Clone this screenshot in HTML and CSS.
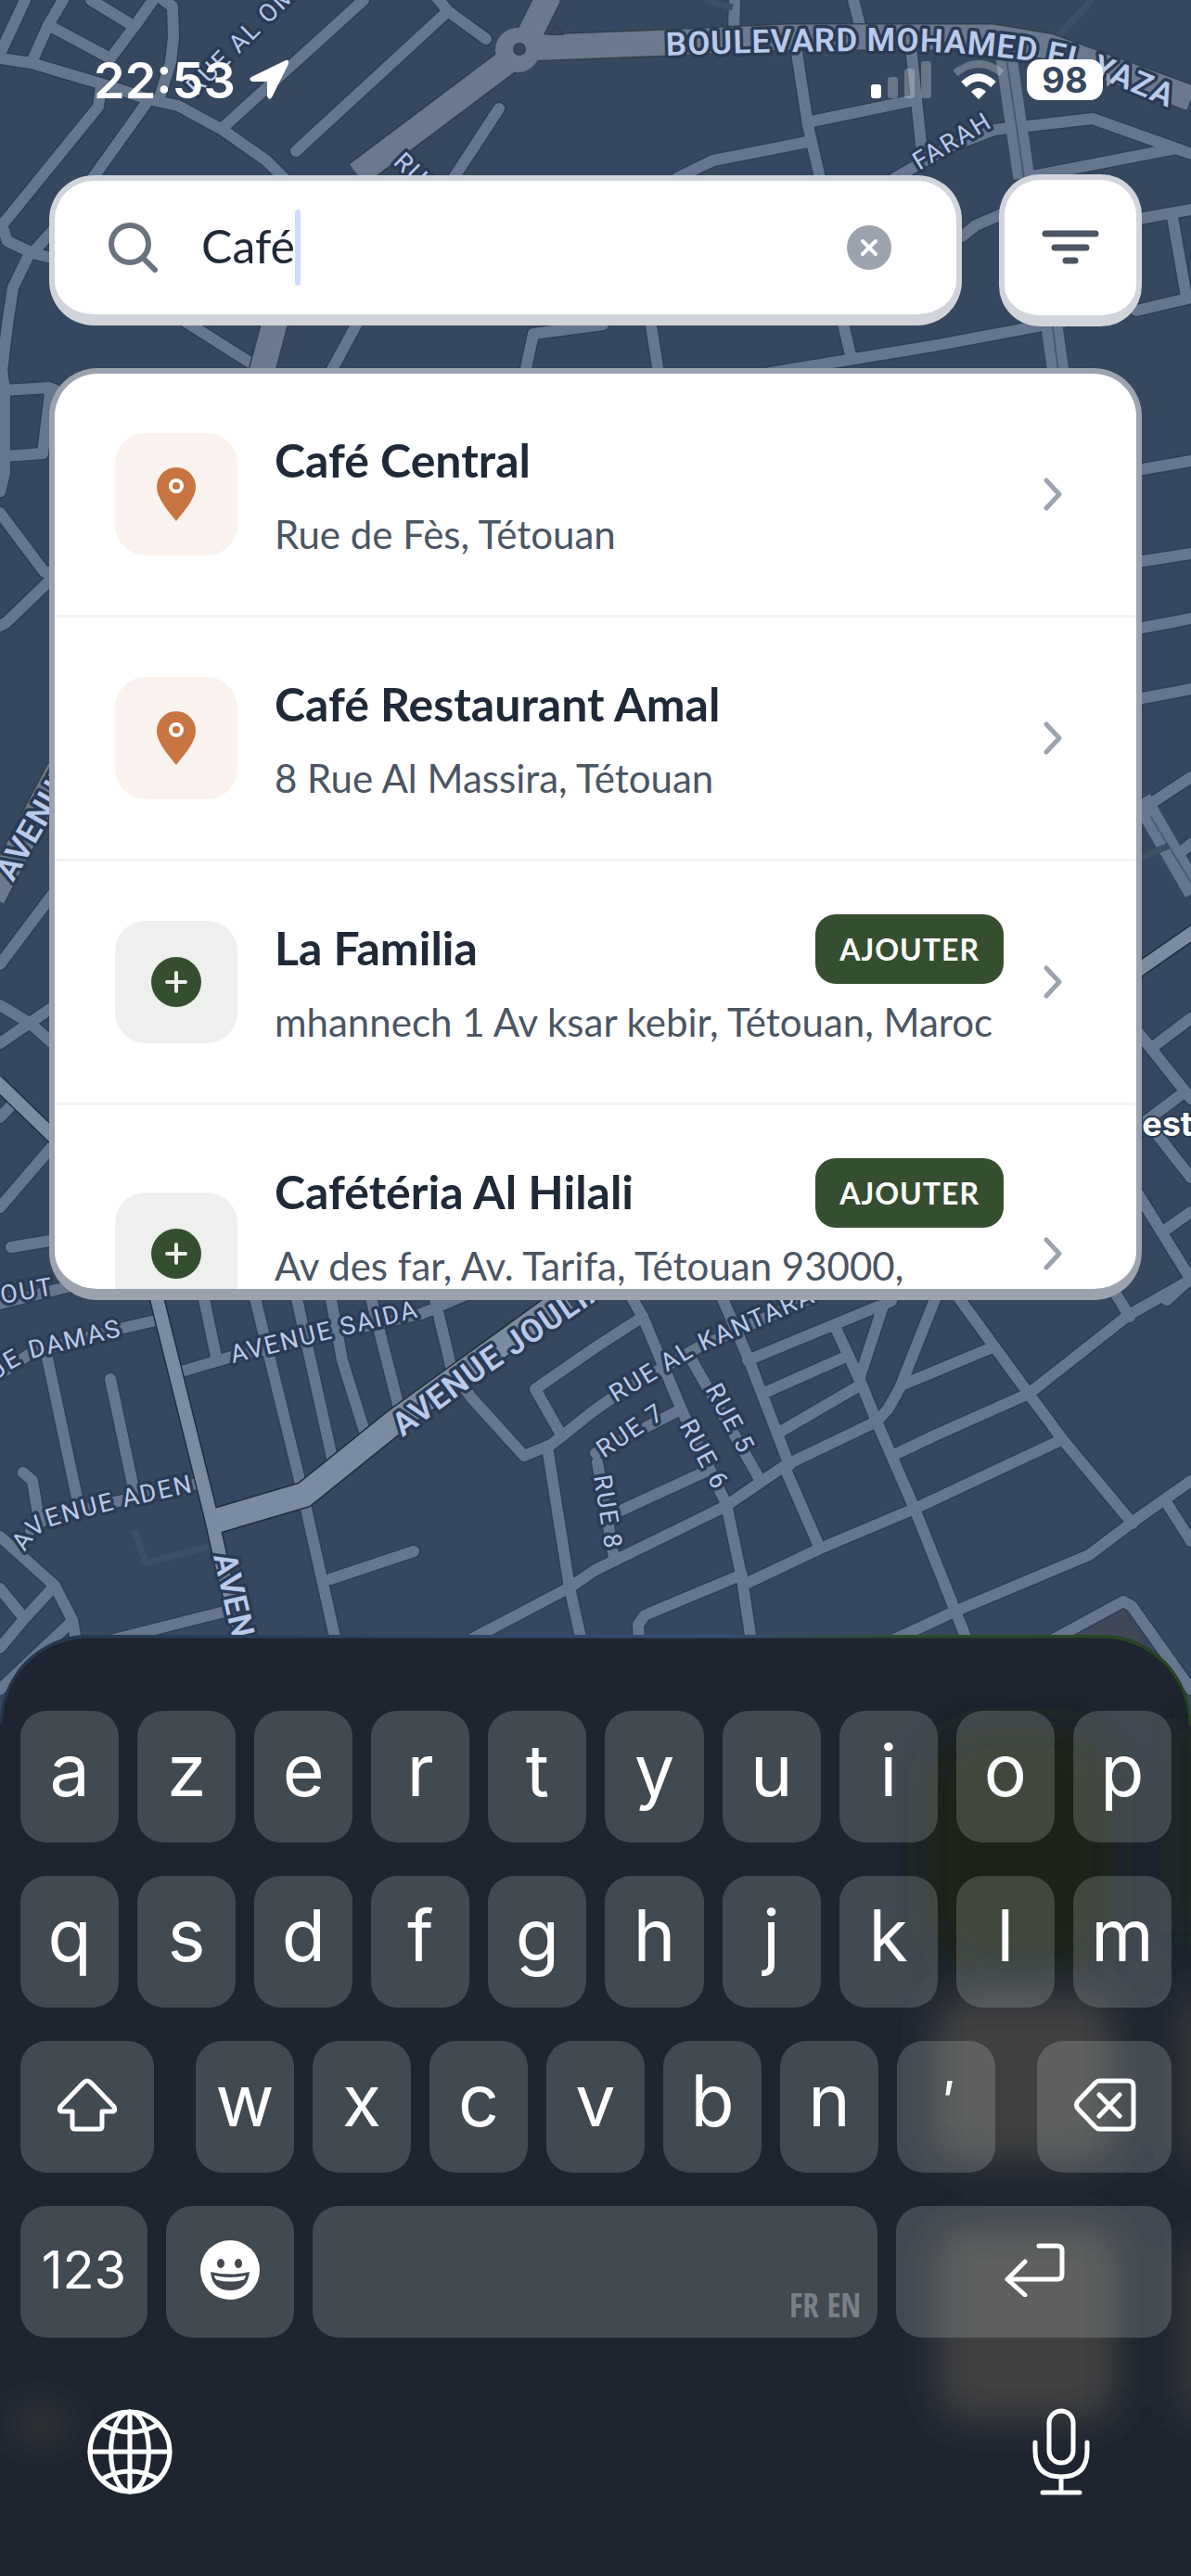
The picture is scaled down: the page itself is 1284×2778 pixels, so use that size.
FILE: index.html
```html
<!DOCTYPE html>
<html lang="fr">
<head>
<meta charset="utf-8">
<meta name="viewport" content="width=device-width, initial-scale=1">
<title>Recherche de cafés</title>
<link rel="stylesheet" href="styles.css">
</head>
<body>
<div class="app">
  <svg class="map" viewBox="0 0 1284 2778" preserveAspectRatio="xMidYMin slice" aria-hidden="true">
    <defs>
      <g id="streets">
        <path d="M27 0L0 58M68 0L52 27L35 65M98 0L144 28M165 0L146 27L119 63M52 27L119 63M176 0L186 7L187 40L184 67L172 105M0 63L34 68L118 93L160 107L192 114L240 140L287 173L310 196M241 137L392 0M319 163L483 12M470 -4L483 12L524 42M160 108L100 192M109 93L106 115L2 243L8 260L35 273L60 279M35 273L60 245M31 275L14 310L8 350L2 400L5 420L5 510L0 530"/>
        <path d="M538 117L489 192M387 345L356 402M197 345L276 395M650 350L575 360L566 402M792 0L791 35M920 0L929 35M858 50L871 135L884 192M908 345L918 387M982 50L994 165M875 131L986 108M871 153L769 173L730 192M965 192L1020 160L1072 140L1178 128L1268 160L1284 166M1113 190L1268 160M1037 255L1052 243L1080 231M1228 236L1284 226M1264 234L1279 320M1225 335L1284 321M830 402L1006 373L1150 346M701 345L710 402"/>
        <path d="M1226 507L1284 497M1226 606L1284 597M1226 678L1284 667M1226 754L1284 743M1234 871L1284 838M1272 920L1284 910M1226 1112L1284 1185M1243 1129L1284 1098M1226 1216L1278 1177M1248 1224L1284 1270M1226 1286L1284 1380M1254 1328L1284 1307M1258 1402L1284 1378"/>
        <path d="M3 421L53 418L60 421M5 492L46 489L54 424M0 553L48 617L60 617M60 620L7 671L0 675M0 1040L60 960M0 1084L33 1104L60 1128M0 1125L60 1084M0 1205L16 1188M0 1302L60 1232M12 1345L60 1337M0 1406L80 1386"/>
        <path d="M0 1482L35 1458L129 1433L172 1423M49 1455L84 1620M119 1487L145 1610M33 1650L49 1638L123 1620L213 1600M25 1588L35 1597L41 1633M0 1657L59 1710L78 1747L83 1775M59 1710L25 1747L0 1777M0 1713L25 1744M76 1750L0 1822M115 1770L242 1738M219 1396L233 1463M199 1478L250 1463L454 1417L505 1395M274 1396L324 1600L362 1770M319 1396L358 1572M356 1396L369 1467L395 1550M399 1396L430 1518M468 1396L471 1410L487 1477L508 1507L565 1570L594 1558L642 1520L671 1500L753 1453L896 1390M693 1420L642 1453L577 1498L606 1549M356 1703L446 1673M590 1560L614 1712L627 1770M504 1770L614 1712L642 1693L781 1625L847 1580L945 1533"/>
        <path d="M679 1396L693 1420L736 1523L783 1622L800 1703L810 1770M742 1460L820 1597M642 1567L730 1522M644 1577L662 1680M667 1630L765 1585M777 1396L806 1463L851 1580M847 1585L884 1670M806 1467L961 1403M822 1503L912 1463M843 1543L927 1494M900 1430L929 1493L945 1533L986 1627L1031 1740L1043 1770M956 1396L927 1485M1010 1396L970 1497L957 1520L945 1533M1031 1396L1109 1503L1146 1553L1221 1643M974 1493L1070 1453M966 1568L1010 1547L1109 1503L1217 1418L1284 1380M1202 1394L1218 1420M806 1707L884 1670L986 1627L1144 1553M800 1698L695 1742L688 1752L689 1770M960 1770L1031 1737L1174 1677L1223 1640L1284 1597M1256 1618L1284 1662M1132 1770L1211 1727L1220 1732L1284 1822"/>
      </g>
      <g id="boulevards">
        <path d="M592 -5L562 55L385 188M297 345L282 402M562 52L642 49L720 46L850 40L1070 40L1130 50L1284 106M-8 968L64 830"/>
      </g>
      <g id="avenues">
        <path d="M-4 1166L64 1232M168 1396L228 1637L242 1700L262 1770M1226 1047L1288 1004"/>
      </g>
      <path id="p-boulevard" d="M718 60Q850 55 950 55Q1080 55 1165 77Q1240 105 1350 158"/>
      <path id="p-om" d="M212 104L340 -24"/>
      <path id="p-damas" d="M-5 1490Q14 1472 42 1463L170 1431"/>
      <path id="p-aden" d="M27 1674Q37 1655 53 1647Q90 1634 240 1602"/>
      <path id="p-kantara" d="M664 1513L750 1461L920 1386"/>
      <path id="p-saida" d="M251 1470L480 1413"/>
      <path id="p-joulia" d="M434 1550L520 1486L720 1350"/>
    </defs>

    <path class="park" d="M1150 1770L1211 1735L1250 1800L1284 1850L1284 1900L1150 1900Z"/>
    <use href="#streets" class="street-case"/>
    <use href="#streets" class="street"/>
    <path class="street-dual" d="M1084 56L1104 192M1133 345L1141 402M1230 862L1288 962"/>
    <path class="median" d="M1084 56L1104 192M1134 345L1141 402M1240 880L1288 958"/>
    <path class="lane" d="M145 1650L156 1682L160 1685L225 1668M1177 0L1138 42M1230 925L1260 912M760 0L790 8"/>
    <use href="#boulevards" class="boulevard-case"/>
    <circle class="roundabout" cx="558" cy="54" r="24"/>
    <use href="#boulevards" class="boulevard"/>
    <path class="island" d="M600 28L607 37L592 37Z"/>
    <circle class="island" cx="560" cy="53" r="6"/>
    <use href="#avenues" class="avenue-case"/>
    <path class="joulia-case" d="M233 1640L328 1612L426 1533L610 1400"/>
    <use href="#avenues" class="avenue"/>
    <path class="joulia" d="M233 1640L328 1612L426 1533L610 1400"/>

    <g class="label label-small">
      <text><textPath href="#p-om">RUE AL OMRANE</textPath></text>
      <text transform="translate(423 176) rotate(44)">RUE</text>
      <text transform="translate(991 184) rotate(-31)">FARAH</text>
      <text transform="translate(2 1406) rotate(-10)">OUT</text>
      <text><textPath href="#p-damas">UE DAMAS</textPath></text>
      <text><textPath href="#p-saida">AVENUE SAIDA</textPath></text>
      <text><textPath href="#p-aden">AVENUE ADEN</textPath></text>
      <text><textPath href="#p-kantara">RUE AL KANTARA</textPath></text>
      <text transform="translate(651 1573) rotate(-34)">RUE 7</text>
      <text transform="translate(732 1537) rotate(62)">RUE 6</text>
      <text transform="translate(760 1498) rotate(62)">RUE 5</text>
      <text transform="translate(640 1592) rotate(81)">RUE 8</text>
    </g>
    <g class="label label-large">
      <text><textPath href="#p-boulevard">BOULEVARD MOHAMED EL YAZA</textPath></text>
      <text transform="translate(14 952) rotate(-60)">AVENUE</text>
      <text><textPath href="#p-joulia">AVENUE JOULIA</textPath></text>
      <text transform="translate(230 1678) rotate(77)">AVEN</text>
    </g>
    <text class="poi" x="1208" y="1225">Rest</text>
  </svg>

  <header class="status">
    <div class="status-left">
      <time class="clock">22:53</time>
      <svg class="location" viewBox="0 0 44 44" aria-hidden="true"><path d="M40 1Q44 0 43 5L25 41Q22 45 20 40L20 24L4 24Q-1 22 3 19Z" fill="#fff"/></svg>
    </div>
    <div class="status-right">
      <svg class="signal" viewBox="0 0 66 42" aria-hidden="true"><g fill="#fff"><rect x="0" y="26" width="11" height="15" rx="3"/><g opacity=".25"><rect x="18" y="18" width="11" height="23" rx="3"/><rect x="36" y="9" width="11" height="32" rx="3"/><rect x="54" y="1" width="11" height="40" rx="3"/></g></g></svg>
      <svg class="wifi" viewBox="0 0 56 42" aria-hidden="true"><g fill="none" stroke="#fff" stroke-width="8"><path d="M3 14Q28 -6 53 14" opacity=".25"/><path d="M12 26Q28 11 44 26"/></g><path d="M28 42L20 34Q28 26 36 34Z" fill="#fff"/></svg>
      <div class="battery"><span class="battery-level">98</span><span class="battery-cap"></span></div>
    </div>
  </header>

  <main class="content">
    <form class="search-row" role="search">
      <div class="search-box">
        <svg class="search-icon" viewBox="0 0 56 56" aria-hidden="true"><g fill="none" stroke="#6b7280" stroke-width="6" stroke-linecap="round"><circle cx="25" cy="24" r="20"/><path d="M40 40L52 52"/></g></svg>
        <label class="visually-hidden" for="query">Rechercher</label>
        <input class="search-input" id="query" type="text" value="Café">
        <span class="caret"></span>
        <button class="clear" type="button" aria-label="Effacer"><svg viewBox="0 0 48 48"><circle cx="24" cy="24" r="24" fill="#9ca3af"/><path d="M17 17L31 31M31 17L17 31" stroke="#fff" stroke-width="4" stroke-linecap="round"/></svg></button>
      </div>
      <button class="filter" type="button" aria-label="Filtrer"><svg viewBox="0 0 62 38"><path d="M4 4H58M14 19H48M26 33H36" stroke="#4b5563" stroke-width="7" stroke-linecap="round"/></svg></button>
    </form>

    <ul class="results">
      <li class="result">
        <span class="tile tile-pin"><svg class="pin" viewBox="0 0 42 58"><path d="M21 0A21 21 0 0 1 42 21C42 34 28 49 21 58C14 49 0 34 0 21A21 21 0 0 1 21 0Z" fill="#c87541"/><circle cx="21" cy="20" r="6" fill="none" stroke="#fff" stroke-width="4"/></svg></span>
        <div class="result-text">
          <div class="result-head"><a class="result-name" href="#central">Café Central</a></div>
          <p class="result-address">Rue de Fès, Tétouan</p>
        </div>
        <svg class="chevron" viewBox="0 0 20 36"><path d="M3 3L17 18L3 33"/></svg>
      </li>
      <li class="result">
        <span class="tile tile-pin"><svg class="pin" viewBox="0 0 42 58"><path d="M21 0A21 21 0 0 1 42 21C42 34 28 49 21 58C14 49 0 34 0 21A21 21 0 0 1 21 0Z" fill="#c87541"/><circle cx="21" cy="20" r="6" fill="none" stroke="#fff" stroke-width="4"/></svg></span>
        <div class="result-text">
          <div class="result-head"><a class="result-name" href="#amal">Café Restaurant Amal</a></div>
          <p class="result-address">8 Rue Al Massira, Tétouan</p>
        </div>
        <svg class="chevron" viewBox="0 0 20 36"><path d="M3 3L17 18L3 33"/></svg>
      </li>
      <li class="result">
        <span class="tile tile-add"><svg class="plus" viewBox="0 0 54 54"><circle cx="27" cy="27" r="27" fill="#354e2f"/><path d="M27 17V37M17 27H37" stroke="#edf0ed" stroke-width="4" stroke-linecap="round"/></svg></span>
        <div class="result-text">
          <div class="result-head"><a class="result-name" href="#familia">La Familia</a><button class="add" type="button">AJOUTER</button></div>
          <p class="result-address">mhannech 1 Av ksar kebir, Tétouan, Maroc</p>
        </div>
        <svg class="chevron" viewBox="0 0 20 36"><path d="M3 3L17 18L3 33"/></svg>
      </li>
      <li class="result">
        <span class="tile tile-add"><svg class="plus" viewBox="0 0 54 54"><circle cx="27" cy="27" r="27" fill="#354e2f"/><path d="M27 17V37M17 27H37" stroke="#edf0ed" stroke-width="4" stroke-linecap="round"/></svg></span>
        <div class="result-text">
          <div class="result-head"><a class="result-name" href="#hilali">Cafétéria Al Hilali</a><button class="add" type="button">AJOUTER</button></div>
          <p class="result-address two-lines">Av des far, Av. Tarifa, Tétouan 93000,</p>
        </div>
        <svg class="chevron" viewBox="0 0 20 36"><path d="M3 3L17 18L3 33"/></svg>
      </li>
    </ul>
  </main>

  <section class="keyboard" aria-label="Clavier">
    <svg class="backdrop" viewBox="0 0 1284 1014" preserveAspectRatio="none" aria-hidden="true">
      <defs>
        <filter id="soft" x="-50%" y="-50%" width="200%" height="200%"><feGaussianBlur stdDeviation="20"/></filter>
        <linearGradient id="rim"><stop offset="0" stop-color="#24364d"/><stop offset=".6" stop-color="#34507a"/><stop offset=".76" stop-color="#2c4a2c"/><stop offset="1" stop-color="#27451d"/></linearGradient>
      </defs>
      <g filter="url(#soft)">
        <rect x="1000" y="100" width="200" height="260" rx="60" fill="#1b2419"/>
        <rect x="1276" y="90" width="30" height="230" fill="#1a2517"/>
        <rect x="1006" y="390" width="196" height="176" rx="30" fill="#414040"/>
        <rect x="1010" y="640" width="194" height="206" rx="30" fill="#414040"/>
        <rect x="1278" y="390" width="40" height="176" fill="#414040"/>
        <rect x="1278" y="660" width="40" height="180" fill="#414040"/>
        <ellipse cx="44" cy="850" rx="34" ry="14" fill="#3c3c3a"/>
      </g>
      <path d="M0 97A96 96 0 0 1 96 1H1188A96 96 0 0 1 1284 97" fill="none" stroke="url(#rim)" stroke-width="5"/>
    </svg>
    <div class="keys">
      <div class="key-row">
        <button class="key">a</button><button class="key">z</button><button class="key">e</button><button class="key">r</button><button class="key">t</button><button class="key">y</button><button class="key">u</button><button class="key">i</button><button class="key">o</button><button class="key">p</button>
      </div>
      <div class="key-row">
        <button class="key">q</button><button class="key">s</button><button class="key">d</button><button class="key">f</button><button class="key">g</button><button class="key">h</button><button class="key">j</button><button class="key">k</button><button class="key">l</button><button class="key">m</button>
      </div>
      <div class="key-row row-shift">
        <button class="key key-icon" aria-label="Majuscule"><svg class="shift-icon" viewBox="0 0 66 58"><path d="M33 3Q35 3 37 5L62 31Q64 36 60 36H49V52Q49 55 46 55H20Q17 55 17 52V36H6Q2 36 4 31L29 5Q31 3 33 3Z"/></svg></button>
        <div class="key-group">
          <button class="key">w</button><button class="key">x</button><button class="key">c</button><button class="key">v</button><button class="key">b</button><button class="key">n</button><button class="key key-slant">'</button>
        </div>
        <button class="key key-icon" aria-label="Supprimer"><svg class="delete-icon" viewBox="0 0 68 58"><path d="M28 3H59Q65 3 65 9V49Q65 55 59 55H28Q26 55 24 53L5 33Q2 29 5 25L24 5Q26 3 28 3ZM28 18L50 41M50 18L28 41"/></svg></button>
      </div>
      <div class="key-row row-space">
        <button class="key key-icon key-numbers">123</button>
        <button class="key key-icon" aria-label="Emoji"><svg class="emoji-icon" viewBox="0 0 64 64"><circle cx="32" cy="32" r="32" fill="#fff"/><g fill="#434851"><ellipse cx="22" cy="25" rx="4" ry="5"/><ellipse cx="41" cy="25" rx="4" ry="5"/><path d="M11 34Q32 39 53 34Q51 54 32 54Q13 54 11 34Z"/></g><path d="M15 38Q32 42 49 38Q48 43 45 43Q32 46 19 43Q16 43 15 38Z" fill="#fff"/></svg></button>
        <button class="key key-space">FR EN</button>
        <button class="key key-icon" aria-label="Retour"><svg class="return-icon" viewBox="0 0 66 58"><path d="M38 3H58Q63 3 63 8V34Q63 39 58 39H4M23 20L4 39L23 56"/></svg></button>
      </div>
    </div>
    <div class="key-footer">
      <button class="plain" aria-label="Changer de clavier"><svg class="globe" viewBox="0 0 90 90"><circle cx="45" cy="45" r="42"/><ellipse cx="45" cy="45" rx="20" ry="42"/><path d="M45 3V87M3 45H87M15 16Q45 33 75 16M15 74Q45 57 75 74"/></svg></button>
      <button class="plain" aria-label="Dicter"><svg class="mic" viewBox="0 0 62 94"><rect x="18" y="3" width="26" height="56" rx="13"/><path d="M3 37V46Q3 74 31 74Q59 74 59 46V37M31 74V90M11 91H51"/></svg></button>
    </div>
  </section>
</div>
</body>
</html>
```
FILE: styles.css
```css
* {
  box-sizing: border-box;
}

body {
  margin: 0;
  background: #36485f;
  font-family: Lato, "Noto Sans", sans-serif;
}

button {
  margin: 0;
  padding: 0;
  border: 0;
  background: none;
  font: inherit;
}

svg {
  display: block;
}

.app {
  position: relative;
  display: flex;
  flex-direction: column;
  min-height: 100vh;
  overflow: hidden;
}

/* Map */

.map {
  position: absolute;
  inset: 0;
  width: 100%;
  height: 100%;
}

.map path,
.map use {
  fill: none;
  stroke-linejoin: round;
}

.map .park {
  fill: #404757;
}

.street-case {
  stroke: #2e3f56;
  stroke-width: 15;
  stroke-linecap: round;
}

.street {
  stroke: #65768e;
  stroke-width: 12;
  stroke-linecap: round;
}

.street-dual {
  stroke: #65768e;
  stroke-width: 23;
}

.median {
  stroke: #4a5b73;
  stroke-width: 2;
}

.lane {
  stroke: #3f4f66;
  stroke-width: 7;
}

.boulevard-case {
  stroke: #343f4d;
  stroke-width: 30;
}

.boulevard {
  stroke: #6b798e;
  stroke-width: 27;
}

.roundabout {
  fill: #6b798e;
}

.map .island {
  fill: #36485f;
  stroke: #343f4d;
  stroke-width: 2;
}

.avenue-case {
  stroke: #222c39;
  stroke-width: 17;
}

.avenue {
  stroke: #7b8ba2;
  stroke-width: 14;
}

.joulia-case {
  stroke: #222c39;
  stroke-width: 29;
}

.joulia {
  stroke: #7b8ba2;
  stroke-width: 26;
}

.label {
  fill: #b9caea;
  stroke: #2a3b53;
  stroke-width: 7;
  stroke-linejoin: round;
  paint-order: stroke;
  font-family: Roboto, sans-serif;
}

.label-small {
  font-size: 27px;
  letter-spacing: 2px;
}

.label-large {
  font-size: 35px;
  font-weight: 600;
  letter-spacing: 1px;
}

.poi {
  fill: #fff;
  stroke: #2a3b53;
  stroke-width: 4;
  paint-order: stroke;
  font: 700 36px Inter, sans-serif;
}

/* Status bar */

.status {
  position: relative;
  display: flex;
  justify-content: space-between;
  align-items: center;
  height: 172px;
  padding: 0 87px 0 101px;
  color: #fff;
  font-family: Inter, sans-serif;
}

.status-left,
.status-right {
  display: flex;
  align-items: center;
}

.status-left {
  gap: 14px;
}

.clock {
  font-size: 54px;
  font-weight: 600;
}

.location {
  width: 44px;
  height: 44px;
}

.signal {
  width: 66px;
  height: 42px;
  margin-right: 22px;
}

.wifi {
  width: 56px;
  height: 42px;
  margin-right: 24px;
}

.battery {
  display: flex;
  align-items: center;
  gap: 4px;
}

.battery-level {
  width: 82px;
  border-radius: 14px;
  background: #fff;
  color: #36485f;
  font-size: 38px;
  font-weight: 700;
  line-height: 44px;
  text-align: center;
}

.battery-cap {
  width: 4px;
  height: 14px;
  border-radius: 0 4px 4px 0;
  background: #8995a5;
}

/* Search */

.content {
  position: relative;
  flex: 1;
  padding: 16px 53px 0;
}

.search-row {
  display: flex;
  align-items: center;
  gap: 40px;
}

.search-box {
  display: flex;
  flex: 1;
  align-items: center;
  height: 162px;
  padding: 0 70px 0 56px;
  border: 6px solid #d1d5db;
  border-bottom-width: 12px;
  border-radius: 48px;
  background: #fff;
}

.search-icon {
  width: 56px;
  height: 56px;
  margin-right: 46px;
}

.search-input {
  field-sizing: content;
  padding: 0 0 4px;
  border: 0;
  outline: 0;
  background: none;
  color: #1f2937;
  font: 400 50px Lato, "Noto Sans", sans-serif;
}

.caret {
  width: 6px;
  height: 82px;
  border-radius: 3px;
  background: #cfdcff;
}

.clear {
  margin-left: auto;
}

.clear svg {
  width: 48px;
  height: 48px;
}

.filter {
  display: grid;
  place-items: center;
  width: 154px;
  height: 164px;
  border: 6px solid #d1d5db;
  border-bottom-width: 12px;
  border-radius: 44px;
  background: #fff;
}

.filter svg {
  width: 62px;
  height: 38px;
}

.visually-hidden {
  position: absolute;
  width: 1px;
  height: 1px;
  overflow: hidden;
  clip-path: inset(50%);
}

/* Results */

.results {
  max-height: 1005px;
  margin: 45px 0 0;
  padding: 0;
  overflow: hidden;
  border: 6px solid #9ca3af;
  border-bottom-width: 12px;
  border-radius: 52px;
  background: #fff;
  list-style: none;
}

.result {
  display: flex;
  align-items: center;
  padding: 57px 80px 57px 65px;
  border-bottom: 3px solid #f3f4f6;
}

.tile {
  display: grid;
  flex: none;
  place-items: center;
  width: 132px;
  height: 132px;
  margin-right: 40px;
  border-radius: 33px;
}

.tile-pin {
  background: #faf2ef;
}

.tile-add {
  background: #edf0ed;
}

.pin {
  width: 42px;
  height: 58px;
}

.plus {
  width: 54px;
  height: 54px;
}

.result-text {
  flex: 1;
}

.result-head {
  display: flex;
  justify-content: space-between;
  align-items: center;
  height: 75px;
  margin-bottom: 12px;
}

.result-name {
  padding-bottom: 4px;
  color: #1f2937;
  font-size: 50px;
  font-weight: 700;
  line-height: 60px;
  text-decoration: none;
}

.result-address {
  margin: 0;
  color: #4b5563;
  font-size: 42px;
  line-height: 59px;
}

.two-lines {
  min-height: 118px;
}

.add {
  height: 75px;
  padding: 0 26px;
  border-radius: 22px;
  background: #354e2f;
  color: #fff;
  font-size: 32px;
  font-weight: 700;
  letter-spacing: 1px;
}

.chevron {
  flex: none;
  width: 20px;
  height: 36px;
  margin-left: 43px;
  fill: none;
  stroke: #9ca3af;
  stroke-width: 5;
  stroke-linecap: round;
  stroke-linejoin: round;
}

/* Keyboard */

.keyboard {
  position: relative;
  display: flex;
  flex-direction: column;
  overflow: hidden;
  border-radius: 96px 96px 0 0;
  background: #1e2530;
  font-family: Inter, sans-serif;
}

.backdrop {
  position: absolute;
  inset: 0;
  width: 100%;
  height: 100%;
}

.keys {
  position: relative;
  display: flex;
  flex-direction: column;
  gap: 36px;
  padding: 82px 21px 0 22px;
}

.key-row {
  display: grid;
  grid-template-columns: repeat(10, 1fr);
  gap: 20px;
}

.row-shift {
  grid-template-columns: 144fr 862fr 145fr;
  gap: 45px;
}

.row-space {
  grid-template-columns: 137fr 138fr 610fr 297fr;
}

.key-group {
  display: grid;
  grid-template-columns: repeat(7, 1fr);
  gap: 20px;
}

.key {
  display: flex;
  justify-content: center;
  align-items: center;
  min-width: 0;
  height: 142px;
  padding-bottom: 14px;
  border-radius: 28px;
  background: rgb(245 255 250 / 17%);
  color: #fff;
  font-size: 77px;
}

.key svg,
.plain svg {
  fill: none;
  stroke: #fff;
  stroke-width: 5;
  stroke-linecap: round;
  stroke-linejoin: round;
}

.key-icon {
  padding-bottom: 4px;
}

.key-slant {
  font-size: 56px;
  font-style: italic;
}

.key-numbers {
  font-size: 56px;
}

.key-space {
  justify-content: flex-end;
  align-items: flex-end;
  padding: 0 18px 12px 0;
  color: #7b7f86;
  font-family: "Liberation Sans Narrow", "Open Sans Condensed", Roboto, sans-serif;
  font-size: 35px;
  font-weight: 300;
}

.shift-icon,
.return-icon {
  width: 66px;
  height: 58px;
}

.delete-icon {
  width: 68px;
  height: 58px;
}

.key .emoji-icon {
  width: 64px;
  height: 64px;
  stroke: none;
}

.key-footer {
  position: relative;
  display: flex;
  justify-content: space-between;
  align-items: center;
  padding: 76px 109px 87px 94px;
}

.globe {
  width: 92px;
  height: 92px;
}

.mic {
  width: 62px;
  height: 94px;
}
```
